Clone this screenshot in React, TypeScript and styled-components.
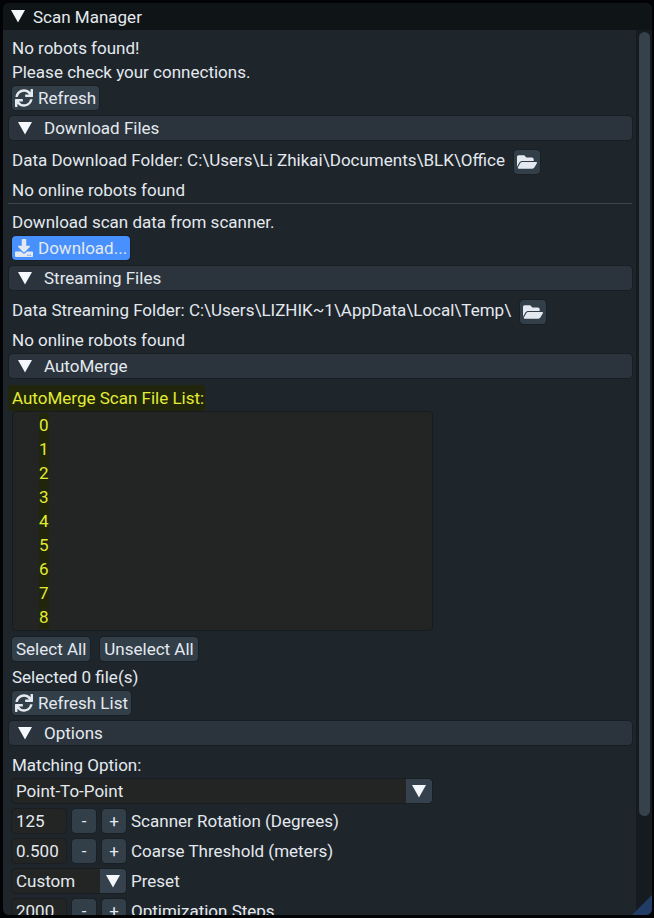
import React, { useId, useState } from "react";
import styled, { createGlobalStyle } from "styled-components";
import { FaDownload, FaFolderOpen, FaSync } from "react-icons/fa";

const GlobalStyle = createGlobalStyle`
  * { box-sizing: border-box; }
  body { margin: 0; background: #020304; }
  body, button, input, select {
    font-family: Roboto, "Liberation Sans", sans-serif;
    font-size: 17px;
    line-height: 20px;
    color: #e4e9ef;
  }
  button, input, select { margin: 0; border: 0; outline-offset: -1px; }
`;

const Desktop = styled.div`
  height: 100vh;
  padding: 3px 2px 3px 3px;
`;

const Window = styled.main`
  position: relative;
  display: flex;
  flex-direction: column;
  height: 100%;
  overflow: hidden;
  border-radius: 6px;
  background: #1e252b;
`;

const TitleBar = styled.header`
  display: flex;
  flex: none;
  align-items: center;
  gap: 8px;
  height: 27px;
  padding: 0 8px;
  background: #0f1416;
`;

const Title = styled.h1`
  margin: 0;
  font-size: 17px;
  font-weight: 400;
`;

const Body = styled.div`
  display: flex;
  flex: 1;
  min-height: 0;
`;

const Content = styled.div`
  flex: 1;
  min-width: 0;
  overflow: hidden;
  padding: 8px 4px 0 6px;
`;

const Track = styled.div`
  flex: none;
  width: 16px;
  padding: 2px 2px 2px 3px;
  background: #161b20;
`;

const Thumb = styled.div`
  height: 89%;
  border-radius: 6px;
  background: #35414b;
`;

const Grip = styled.svg`
  position: absolute;
  right: 0;
  bottom: 0;
  fill: #213d66;
`;

const Group = styled.div`
  padding-left: 3px;
`;

const Text = styled.p`
  display: block;
  margin: 0 0 4px;
  white-space: nowrap;
`;

const Row = styled.div<{ $gap: number }>`
  display: flex;
  align-items: center;
  gap: ${(p) => p.$gap}px;
  margin-bottom: 6px;
`;

const PathRow = styled.div`
  display: flex;
  align-items: flex-start;
  gap: 9px;
  margin-bottom: 6px;
  white-space: nowrap;
`;

const Button = styled.button<{ $primary?: boolean; $icon?: boolean }>`
  display: flex;
  flex: none;
  align-items: center;
  justify-content: center;
  gap: 5px;
  height: 24px;
  padding: ${(p) => (p.$icon ? "0 3px" : "0 4px")};
  border-radius: 4px;
  background: ${(p) => (p.$primary ? "#4790fd" : "#323e48")};
  box-shadow: 0 0 0 1px #182026;
`;

const StepButton = styled(Button)`
  width: 24px;
  padding: 0;
`;

const SectionButton = styled.button`
  display: flex;
  align-items: center;
  gap: 12px;
  width: 100%;
  height: 24px;
  margin-bottom: 10px;
  padding: 0 9px;
  border-radius: 4px;
  background: #2b343c;
  box-shadow: 0 0 0 1px #171e24;
  text-align: left;
`;

const Divider = styled.hr`
  height: 1px;
  margin: -1px 0 8px -4px;
  border: 0;
  background: #3a444c;
`;

const Marked = styled.h2`
  width: fit-content;
  margin: -3px 0 0 -4px;
  padding: 3px 1px 3px 4px;
  border-radius: 4px 2px 0 0;
  background: #20250b;
  color: #e2ec35;
  font-size: 17px;
  font-weight: 400;
`;

const FileList = styled.ul`
  width: 100%;
  max-width: 421px;
  height: 220px;
  margin: 0 0 6px;
  padding: 1px 0 0 26px;
  overflow: hidden;
  list-style: none;
  border: 1px solid #161b20;
  border-radius: 4px;
  background: #222524;
`;

const FileItem = styled.button`
  display: block;
  height: 24px;
  padding: 0;
  background: #20250b;
  color: #e2ec35;
`;

const Field = styled.input`
  width: 54px;
  height: 24px;
  padding: 0 4px;
  border-radius: 4px;
  background: #222524;
  box-shadow: 0 0 0 1px #181e22;
`;

const SelectBox = styled.div<{ $width: number }>`
  position: relative;
  width: 100%;
  max-width: ${(p) => p.$width}px;
  height: 24px;
  overflow: hidden;
  border-radius: 4px;
  background: #222524;
  box-shadow: 0 0 0 1px #181e22;
`;

const Select = styled.select`
  width: 100%;
  height: 24px;
  padding: 0 28px 0 4px;
  appearance: none;
  background: transparent;
`;

const SelectArrow = styled.span`
  position: absolute;
  top: 0;
  right: 0;
  display: flex;
  align-items: center;
  justify-content: center;
  width: 26px;
  height: 24px;
  background: #35424d;
  pointer-events: none;
`;

const Stepper = styled.div`
  display: flex;
  gap: 6px;
`;

function Triangle({ closed = false }: { closed?: boolean }) {
  return (
    <svg width="14" height="13" viewBox="0 0 14 13" fill="#f4f7fb" aria-hidden="true">
      <path d={closed ? "M1 0 13 6.5 1 13Z" : "M0 0H14L7 12.5Z"} />
    </svg>
  );
}

function Section({ title, children }: { title: string; children: React.ReactNode }) {
  const [open, setOpen] = useState(true);
  return (
    <section>
      <SectionButton aria-expanded={open} onClick={() => setOpen(!open)}>
        <Triangle closed={!open} />
        {title}
      </SectionButton>
      {open && <Group>{children}</Group>}
    </section>
  );
}

function Dropdown({ id, width, options }: { id: string; width: number; options: string[] }) {
  return (
    <SelectBox $width={width}>
      <Select id={id}>
        {options.map((o) => (
          <option key={o}>{o}</option>
        ))}
      </Select>
      <SelectArrow>
        <Triangle />
      </SelectArrow>
    </SelectBox>
  );
}

function NumberRow({ label, initial, step, digits }: { label: string; initial: number; step: number; digits: number }) {
  const id = useId();
  const [value, setValue] = useState(initial.toFixed(digits));
  const change = (by: number) => setValue(((parseFloat(value) || 0) + by).toFixed(digits));
  return (
    <Row $gap={5}>
      <Stepper>
        <Field id={id} inputMode="decimal" value={value} onChange={(e) => setValue(e.target.value)} />
        <StepButton aria-label={`Decrease ${label}`} onClick={() => change(-step)}>-</StepButton>
        <StepButton aria-label={`Increase ${label}`} onClick={() => change(step)}>+</StepButton>
      </Stepper>
      <label htmlFor={id}>{label}</label>
    </Row>
  );
}

function FolderRow({ text }: { text: string }) {
  return (
    <PathRow>
      <span>{text}</span>
      <Button $icon aria-label="Choose folder">
        <FaFolderOpen size={20} />
      </Button>
    </PathRow>
  );
}

const files = ["0", "1", "2", "3", "4", "5", "6", "7", "8"];

export default function App() {
  return (
    <Desktop>
      <GlobalStyle />
      <Window>
        <TitleBar>
          <Triangle />
          <Title>Scan Manager</Title>
        </TitleBar>
        <Body>
          <Content>
            <Group>
              <Text>No robots found!</Text>
              <Text>Please check your connections.</Text>
              <Row $gap={9}>
                <Button $icon>
                  <FaSync size={18} />
                  Refresh
                </Button>
              </Row>
            </Group>
            <Section title="Download Files">
              <FolderRow text={"Data Download Folder: C:\\Users\\Li Zhikai\\Documents\\BLK\\Office"} />
              <Text>No online robots found</Text>
              <Divider />
              <Text>Download scan data from scanner.</Text>
              <Row $gap={9}>
                <Button $icon $primary>
                  <FaDownload size={18} />
                  Download...
                </Button>
              </Row>
            </Section>
            <Section title="Streaming Files">
              <FolderRow text={"Data Streaming Folder: C:\\Users\\LIZHIK~1\\AppData\\Local\\Temp\\"} />
              <Text>No online robots found</Text>
            </Section>
            <Section title="AutoMerge">
              <Marked>AutoMerge Scan File List:</Marked>
              <FileList>
                {files.map((f) => (
                  <li key={f}>
                    <FileItem>{f}</FileItem>
                  </li>
                ))}
              </FileList>
              <Row $gap={10}>
                <Button>Select All</Button>
                <Button>Unselect All</Button>
              </Row>
              <Text>Selected 0 file(s)</Text>
              <Row $gap={9}>
                <Button $icon>
                  <FaSync size={18} />
                  Refresh List
                </Button>
              </Row>
            </Section>
            <Section title="Options">
              <Text as="label" htmlFor="matching">Matching Option:</Text>
              <Row $gap={5}>
                <Dropdown id="matching" width={420} options={["Point-To-Point", "Point-To-Plane"]} />
              </Row>
              <NumberRow label="Scanner Rotation (Degrees)" initial={125} step={1} digits={0} />
              <NumberRow label="Coarse Threshold (meters)" initial={0.5} step={0.1} digits={3} />
              <Row $gap={5}>
                <Dropdown id="preset" width={114} options={["Custom", "Default"]} />
                <label htmlFor="preset">Preset</label>
              </Row>
              <NumberRow label="Optimization Steps" initial={2000} step={100} digits={0} />
            </Section>
          </Content>
          <Track>
            <Thumb />
          </Track>
        </Body>
        <Grip width="20" height="20" viewBox="0 0 20 20" aria-hidden="true">
          <path d="M20 0V20H0Z" />
        </Grip>
      </Window>
    </Desktop>
  );
}
